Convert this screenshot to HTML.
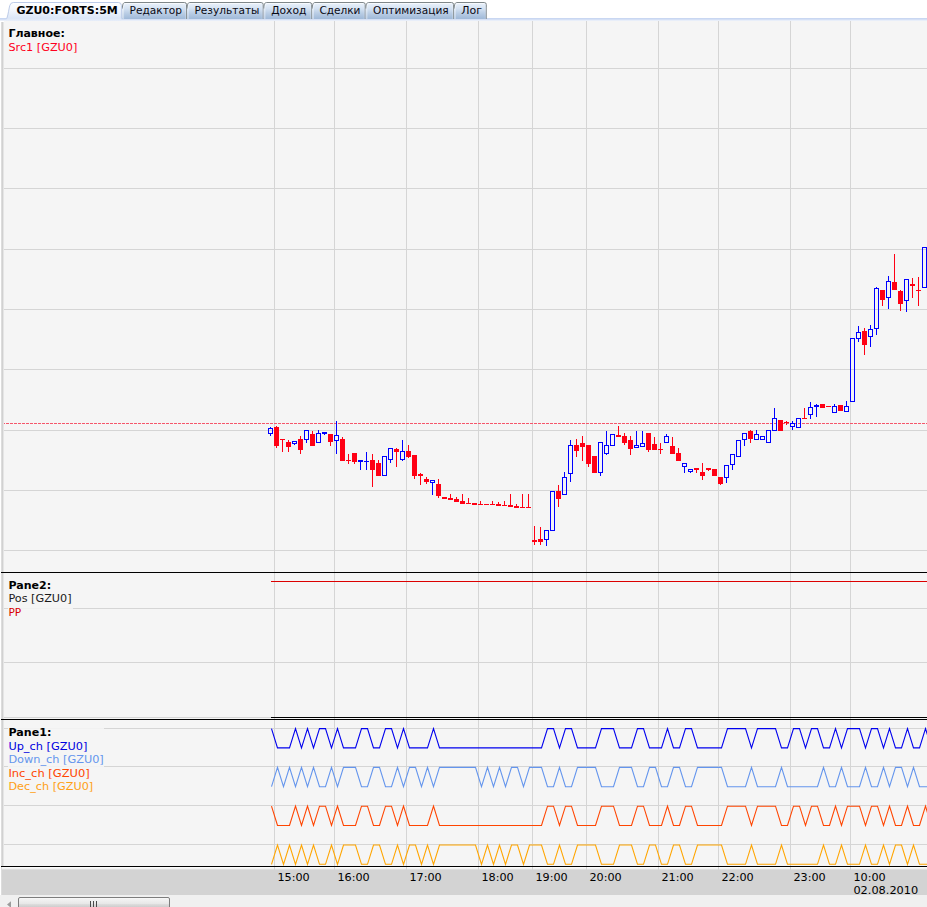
<!DOCTYPE html>
<html><head><meta charset="utf-8"><title>GZU0:FORTS:5M</title>
<style>
html,body{margin:0;padding:0;background:#fff;overflow:hidden}
svg{display:block}
text{font-family:"DejaVu Sans","Liberation Sans",sans-serif;font-size:11px}
.b{font-weight:bold}
</style></head><body>
<svg width="927" height="907" viewBox="0 0 927 907">
<defs>
<linearGradient id="ga" x1="0" y1="0" x2="0" y2="1"><stop offset="0" stop-color="#ffffff"/><stop offset="0.4" stop-color="#f3f7fd"/><stop offset="0.85" stop-color="#dbe6f7"/><stop offset="1" stop-color="#e8eef9"/></linearGradient>
<linearGradient id="gi" x1="0" y1="0" x2="0" y2="1"><stop offset="0" stop-color="#ecf3fb"/><stop offset="0.35" stop-color="#d6e3f3"/><stop offset="0.62" stop-color="#bccfe6"/><stop offset="1" stop-color="#9fb9d8"/></linearGradient>
<linearGradient id="gs" x1="0" y1="0" x2="0" y2="1"><stop offset="0" stop-color="#c9d8f1"/><stop offset="1" stop-color="#e9eef9"/></linearGradient>
<linearGradient id="gt" x1="0" y1="0" x2="0" y2="1"><stop offset="0" stop-color="#ffffff"/><stop offset="0.12" stop-color="#f3f3f3"/><stop offset="0.5" stop-color="#e8e8e8"/><stop offset="0.58" stop-color="#dcdcdc"/><stop offset="0.85" stop-color="#cacaca"/></linearGradient>
</defs>
<rect x="0" y="0" width="927" height="907" fill="#ffffff"/>

<rect x="0" y="18" width="927" height="1" fill="#c9d7f2"/><rect x="0" y="19" width="927" height="1" fill="#d5e0f5"/><rect x="0" y="20" width="927" height="1" fill="#e8eef9"/>
<path d="M122.3,19 L122.3,7 C122.39999999999999,4.5 123.2,2.5 125.0,2.5 L184.5,2.5 Q186.5,2.5 186.5,4.5 L186.5,19 Z" fill="url(#gi)"/>
<path d="M125.2,3.5 L184.5,3.5" fill="none" stroke="#ffffff" stroke-opacity="0.6" stroke-width="1"/>
<path d="M123.3,19 L123.3,7.5 C123.39999999999999,5 124.0,3.8 125.2,3.6" fill="none" stroke="#ffffff" stroke-opacity="0.38" stroke-width="1.6"/>
<path d="M185.5,5 L185.5,19" fill="none" stroke="#ffffff" stroke-opacity="0.22" stroke-width="1"/>
<path d="M122.39999999999999,8.5 C122.39999999999999,4.8 123.2,2.5 125.0,2.5 L184.5,2.5 Q186.5,2.5 186.5,4.5 L186.5,7" fill="none" stroke="#7f878a" stroke-width="1"/>
<path d="M186.5,7 L186.5,19" fill="none" stroke="#8b9397" stroke-width="1"/>
<text x="129.5" y="14" fill="#0a0a14" textLength="52.6" lengthAdjust="spacingAndGlyphs">Редактор</text>
<path d="M187.0,19 L187.0,7 C187.1,4.5 187.9,2.5 189.7,2.5 L261.2,2.5 Q263.2,2.5 263.2,4.5 L263.2,19 Z" fill="url(#gi)"/>
<path d="M189.9,3.5 L261.2,3.5" fill="none" stroke="#ffffff" stroke-opacity="0.6" stroke-width="1"/>
<path d="M188.0,19 L188.0,7.5 C188.1,5 188.7,3.8 189.9,3.6" fill="none" stroke="#ffffff" stroke-opacity="0.38" stroke-width="1.6"/>
<path d="M262.2,5 L262.2,19" fill="none" stroke="#ffffff" stroke-opacity="0.22" stroke-width="1"/>
<path d="M187.1,8.5 C187.1,4.8 187.9,2.5 189.7,2.5 L261.2,2.5 Q263.2,2.5 263.2,4.5 L263.2,7" fill="none" stroke="#7f878a" stroke-width="1"/>
<path d="M263.2,7 L263.2,19" fill="none" stroke="#8b9397" stroke-width="1"/>
<text x="194.4" y="14" fill="#0a0a14" textLength="65.1" lengthAdjust="spacingAndGlyphs">Результаты</text>
<path d="M263.7,19 L263.7,7 C263.8,4.5 264.59999999999997,2.5 266.4,2.5 L309.7,2.5 Q311.7,2.5 311.7,4.5 L311.7,19 Z" fill="url(#gi)"/>
<path d="M266.59999999999997,3.5 L309.7,3.5" fill="none" stroke="#ffffff" stroke-opacity="0.6" stroke-width="1"/>
<path d="M264.7,19 L264.7,7.5 C264.8,5 265.4,3.8 266.59999999999997,3.6" fill="none" stroke="#ffffff" stroke-opacity="0.38" stroke-width="1.6"/>
<path d="M310.7,5 L310.7,19" fill="none" stroke="#ffffff" stroke-opacity="0.22" stroke-width="1"/>
<path d="M263.8,8.5 C263.8,4.8 264.59999999999997,2.5 266.4,2.5 L309.7,2.5 Q311.7,2.5 311.7,4.5 L311.7,7" fill="none" stroke="#7f878a" stroke-width="1"/>
<path d="M311.7,7 L311.7,19" fill="none" stroke="#8b9397" stroke-width="1"/>
<text x="271.2" y="14" fill="#0a0a14" textLength="35.2" lengthAdjust="spacingAndGlyphs">Доход</text>
<path d="M312.2,19 L312.2,7 C312.3,4.5 313.09999999999997,2.5 314.9,2.5 L363.2,2.5 Q365.2,2.5 365.2,4.5 L365.2,19 Z" fill="url(#gi)"/>
<path d="M315.09999999999997,3.5 L363.2,3.5" fill="none" stroke="#ffffff" stroke-opacity="0.6" stroke-width="1"/>
<path d="M313.2,19 L313.2,7.5 C313.3,5 313.9,3.8 315.09999999999997,3.6" fill="none" stroke="#ffffff" stroke-opacity="0.38" stroke-width="1.6"/>
<path d="M364.2,5 L364.2,19" fill="none" stroke="#ffffff" stroke-opacity="0.22" stroke-width="1"/>
<path d="M312.3,8.5 C312.3,4.8 313.09999999999997,2.5 314.9,2.5 L363.2,2.5 Q365.2,2.5 365.2,4.5 L365.2,7" fill="none" stroke="#7f878a" stroke-width="1"/>
<path d="M365.2,7 L365.2,19" fill="none" stroke="#8b9397" stroke-width="1"/>
<text x="319.4" y="14" fill="#0a0a14" textLength="41" lengthAdjust="spacingAndGlyphs">Сделки</text>
<path d="M365.7,19 L365.7,7 C365.8,4.5 366.59999999999997,2.5 368.4,2.5 L451.6,2.5 Q453.6,2.5 453.6,4.5 L453.6,19 Z" fill="url(#gi)"/>
<path d="M368.59999999999997,3.5 L451.6,3.5" fill="none" stroke="#ffffff" stroke-opacity="0.6" stroke-width="1"/>
<path d="M366.7,19 L366.7,7.5 C366.8,5 367.4,3.8 368.59999999999997,3.6" fill="none" stroke="#ffffff" stroke-opacity="0.38" stroke-width="1.6"/>
<path d="M452.6,5 L452.6,19" fill="none" stroke="#ffffff" stroke-opacity="0.22" stroke-width="1"/>
<path d="M365.8,8.5 C365.8,4.8 366.59999999999997,2.5 368.4,2.5 L451.6,2.5 Q453.6,2.5 453.6,4.5 L453.6,7" fill="none" stroke="#7f878a" stroke-width="1"/>
<path d="M453.6,7 L453.6,19" fill="none" stroke="#8b9397" stroke-width="1"/>
<text x="373.1" y="14" fill="#0a0a14" textLength="75.5" lengthAdjust="spacingAndGlyphs">Оптимизация</text>
<path d="M454.1,19 L454.1,7 C454.20000000000005,4.5 455.0,2.5 456.8,2.5 L484.3,2.5 Q486.3,2.5 486.3,4.5 L486.3,19 Z" fill="url(#gi)"/>
<path d="M457.0,3.5 L484.3,3.5" fill="none" stroke="#ffffff" stroke-opacity="0.6" stroke-width="1"/>
<path d="M455.1,19 L455.1,7.5 C455.20000000000005,5 455.8,3.8 457.0,3.6" fill="none" stroke="#ffffff" stroke-opacity="0.38" stroke-width="1.6"/>
<path d="M485.3,5 L485.3,19" fill="none" stroke="#ffffff" stroke-opacity="0.22" stroke-width="1"/>
<path d="M454.20000000000005,8.5 C454.20000000000005,4.8 455.0,2.5 456.8,2.5 L484.3,2.5 Q486.3,2.5 486.3,4.5 L486.3,7" fill="none" stroke="#7f878a" stroke-width="1"/>
<path d="M486.3,7 L486.3,19" fill="none" stroke="#8b9397" stroke-width="1"/>
<text x="461.2" y="14" fill="#0a0a14" textLength="20.8" lengthAdjust="spacingAndGlyphs">Лог</text>
<path d="M6.8,18.5 C8.4,14 9.0,8 9.8,5.5 Q10.6,2.5 13.3,2.5 L118.4,2.5 Q121.4,2.5 121.4,5.5 L121.4,18.5 L121.4,21 L5.8,21 Z" fill="url(#ga)"/>
<path d="M6.8,18.5 C8.4,14 9.0,8 9.8,5.5 Q10.6,2.5 13.3,2.5 L118.4,2.5 Q121.4,2.5 121.4,5.5 L121.4,18.5" fill="none" stroke="#bccbe8" stroke-width="1"/>
<text class="b" x="16.4" y="14" fill="#000" textLength="101.4" lengthAdjust="spacingAndGlyphs">GZU0:FORTS:5M</text>
<rect x="4" y="21" width="923" height="846" fill="#f5f5f5"/>
<rect x="1" y="22" width="1" height="873" fill="#dcdcdc"/>
<rect x="2" y="22" width="1" height="873" fill="#d1d1d1"/>
<rect x="3" y="22" width="1" height="873" fill="#e5e5e5"/>
<rect x="2" y="867" width="925" height="1" fill="#fafafa"/>
<rect x="2" y="868" width="925" height="1" fill="#f2f2f2"/>
<rect x="2" y="869" width="925" height="1" fill="#dedede"/>
<rect x="2" y="870" width="925" height="25" fill="#d3d3d3"/>
<rect x="0" y="895" width="927" height="12" fill="#f0f0f0"/>
<g fill="#d5d5d5" shape-rendering="crispEdges">
<rect x="4" y="68" width="923" height="1"/>
<rect x="4" y="128" width="923" height="1"/>
<rect x="4" y="188" width="923" height="1"/>
<rect x="4" y="249" width="923" height="1"/>
<rect x="4" y="309" width="923" height="1"/>
<rect x="4" y="369" width="923" height="1"/>
<rect x="4" y="430" width="923" height="1"/>
<rect x="4" y="490" width="923" height="1"/>
<rect x="4" y="550" width="923" height="1"/>
<rect x="4" y="608" width="923" height="1"/>
<rect x="4" y="662" width="923" height="1"/>
<rect x="4" y="717" width="923" height="1"/>
<rect x="4" y="728" width="923" height="1"/>
<rect x="4" y="766" width="923" height="1"/>
<rect x="4" y="805" width="923" height="1"/>
<rect x="4" y="844" width="923" height="1"/>
<rect x="274" y="21" width="1" height="849"/>
<rect x="334" y="21" width="1" height="849"/>
<rect x="406" y="21" width="1" height="849"/>
<rect x="478" y="21" width="1" height="849"/>
<rect x="532" y="21" width="1" height="849"/>
<rect x="586" y="21" width="1" height="849"/>
<rect x="658" y="21" width="1" height="849"/>
<rect x="718" y="21" width="1" height="849"/>
<rect x="790" y="21" width="1" height="849"/>
<rect x="850" y="21" width="1" height="849"/>
</g>
<rect x="8" y="24" width="70" height="30" fill="#f5f5f5" fill-opacity="0.88"/>
<rect x="8" y="576" width="65" height="43" fill="#f5f5f5" fill-opacity="0.88"/>
<rect x="8" y="723" width="96" height="70" fill="#f5f5f5" fill-opacity="0.88"/>
<line x1="4" y1="423.5" x2="927" y2="423.5" stroke="#f5566b" stroke-width="1" stroke-dasharray="3 1" stroke-dashoffset="2" shape-rendering="crispEdges"/>
<g shape-rendering="crispEdges">
<rect x="270" y="427" width="1" height="1" fill="#0000ff"/>
<rect x="270" y="434" width="1" height="2" fill="#0000ff"/>
<rect x="268.5" y="428.5" width="4" height="5" fill="none" stroke="#0000ff" stroke-width="1"/>
<rect x="276" y="426" width="1" height="22" fill="#ff0014"/>
<rect x="274" y="427" width="5" height="19" fill="#ff0014"/>
<rect x="282" y="439" width="1" height="13" fill="#ff0014"/>
<rect x="280" y="439" width="5" height="1" fill="#ff0014"/>
<rect x="288" y="440" width="1" height="12" fill="#ff0014"/>
<rect x="286" y="442" width="5" height="5" fill="#ff0014"/>
<rect x="294" y="444" width="1" height="1" fill="#0000ff"/>
<rect x="292.5" y="441.5" width="4" height="2" fill="none" stroke="#0000ff" stroke-width="1"/>
<rect x="300" y="436" width="1" height="18" fill="#ff0014"/>
<rect x="298" y="439" width="5" height="11" fill="#ff0014"/>
<rect x="306" y="440" width="1" height="3" fill="#0000ff"/>
<rect x="304.5" y="430.5" width="4" height="9" fill="none" stroke="#0000ff" stroke-width="1"/>
<rect x="312" y="431" width="1" height="15" fill="#ff0014"/>
<rect x="310" y="434" width="5" height="12" fill="#ff0014"/>
<rect x="318" y="430" width="1" height="3" fill="#0000ff"/>
<rect x="316.5" y="433.5" width="4" height="9" fill="none" stroke="#0000ff" stroke-width="1"/>
<rect x="324" y="432" width="1" height="3" fill="#0000ff"/>
<rect x="322" y="432" width="5" height="2" fill="#0000ff"/>
<rect x="330" y="434" width="1" height="12" fill="#ff0014"/>
<rect x="328" y="434" width="5" height="8" fill="#ff0014"/>
<rect x="336" y="421" width="1" height="14" fill="#0000ff"/>
<rect x="336" y="441" width="1" height="13" fill="#0000ff"/>
<rect x="334.5" y="435.5" width="4" height="5" fill="none" stroke="#0000ff" stroke-width="1"/>
<rect x="342" y="437" width="1" height="24" fill="#ff0014"/>
<rect x="340" y="439" width="5" height="22" fill="#ff0014"/>
<rect x="348" y="454" width="1" height="10" fill="#ff0014"/>
<rect x="346" y="460" width="5" height="1" fill="#ff0014"/>
<rect x="354" y="453" width="1" height="11" fill="#ff0014"/>
<rect x="352" y="453" width="5" height="9" fill="#ff0014"/>
<rect x="360" y="460" width="1" height="10" fill="#0000ff"/>
<rect x="358" y="460" width="5" height="2" fill="#0000ff"/>
<rect x="366" y="452" width="1" height="18" fill="#0000ff"/>
<rect x="364" y="461" width="5" height="1" fill="#0000ff"/>
<rect x="372" y="454" width="1" height="33" fill="#ff0014"/>
<rect x="370" y="460" width="5" height="10" fill="#ff0014"/>
<rect x="378" y="460" width="1" height="16" fill="#ff0014"/>
<rect x="376" y="463" width="5" height="13" fill="#ff0014"/>
<rect x="382.5" y="456.5" width="4" height="19" fill="none" stroke="#0000ff" stroke-width="1"/>
<rect x="390" y="460" width="1" height="3" fill="#0000ff"/>
<rect x="388.5" y="448.5" width="4" height="11" fill="none" stroke="#0000ff" stroke-width="1"/>
<rect x="396" y="448" width="1" height="19" fill="#ff0014"/>
<rect x="394" y="449" width="5" height="3" fill="#ff0014"/>
<rect x="402" y="440" width="1" height="11" fill="#0000ff"/>
<rect x="402" y="460" width="1" height="1" fill="#0000ff"/>
<rect x="400.5" y="451.5" width="4" height="8" fill="none" stroke="#0000ff" stroke-width="1"/>
<rect x="408" y="445" width="1" height="13" fill="#ff0014"/>
<rect x="406" y="451" width="5" height="6" fill="#ff0014"/>
<rect x="414" y="455" width="1" height="24" fill="#ff0014"/>
<rect x="412" y="455" width="5" height="21" fill="#ff0014"/>
<rect x="420" y="473" width="1" height="12" fill="#ff0014"/>
<rect x="418" y="474" width="5" height="2" fill="#ff0014"/>
<rect x="426" y="477" width="1" height="7" fill="#ff0014"/>
<rect x="424" y="479" width="5" height="3" fill="#ff0014"/>
<rect x="432" y="483" width="1" height="12" fill="#0000ff"/>
<rect x="430.5" y="480.5" width="4" height="2" fill="none" stroke="#0000ff" stroke-width="1"/>
<rect x="438" y="479" width="1" height="19" fill="#ff0014"/>
<rect x="436" y="484" width="5" height="12" fill="#ff0014"/>
<rect x="444" y="497" width="1" height="2" fill="#ff0014"/>
<rect x="442" y="497" width="5" height="2" fill="#ff0014"/>
<rect x="450" y="494" width="1" height="6" fill="#ff0014"/>
<rect x="448" y="498" width="5" height="2" fill="#ff0014"/>
<rect x="456" y="497" width="1" height="5" fill="#ff0014"/>
<rect x="454" y="499" width="5" height="3" fill="#ff0014"/>
<rect x="462" y="494" width="1" height="10" fill="#ff0014"/>
<rect x="460" y="501" width="5" height="3" fill="#ff0014"/>
<rect x="468" y="498" width="1" height="6" fill="#ff0014"/>
<rect x="466" y="503" width="5" height="1" fill="#ff0014"/>
<rect x="474" y="503" width="1" height="2" fill="#ff0014"/>
<rect x="472" y="503" width="5" height="2" fill="#ff0014"/>
<rect x="480" y="501" width="1" height="4" fill="#ff0014"/>
<rect x="478" y="504" width="5" height="1" fill="#ff0014"/>
<rect x="486" y="504" width="1" height="1" fill="#ff0014"/>
<rect x="484" y="504" width="5" height="1" fill="#ff0014"/>
<rect x="492" y="501" width="1" height="4" fill="#ff0014"/>
<rect x="490" y="504" width="5" height="1" fill="#ff0014"/>
<rect x="498" y="502" width="1" height="4" fill="#ff0014"/>
<rect x="496" y="504" width="5" height="2" fill="#ff0014"/>
<rect x="504" y="501" width="1" height="5" fill="#ff0014"/>
<rect x="502" y="505" width="5" height="1" fill="#ff0014"/>
<rect x="510" y="494" width="1" height="13" fill="#ff0014"/>
<rect x="508" y="505" width="5" height="2" fill="#ff0014"/>
<rect x="516" y="504" width="1" height="4" fill="#ff0014"/>
<rect x="514" y="506" width="5" height="2" fill="#ff0014"/>
<rect x="522" y="494" width="1" height="14" fill="#ff0014"/>
<rect x="520" y="507" width="5" height="1" fill="#ff0014"/>
<rect x="528" y="494" width="1" height="14" fill="#ff0014"/>
<rect x="526" y="507" width="5" height="1" fill="#ff0014"/>
<rect x="534" y="526" width="1" height="19" fill="#ff0014"/>
<rect x="532" y="540" width="5" height="2" fill="#ff0014"/>
<rect x="540" y="527" width="1" height="18" fill="#ff0014"/>
<rect x="538" y="539" width="5" height="3" fill="#ff0014"/>
<rect x="546" y="540" width="1" height="6" fill="#0000ff"/>
<rect x="544.5" y="530.5" width="4" height="9" fill="none" stroke="#0000ff" stroke-width="1"/>
<rect x="550.5" y="491.5" width="4" height="39" fill="none" stroke="#0000ff" stroke-width="1"/>
<rect x="558" y="485" width="1" height="22" fill="#ff0014"/>
<rect x="556" y="491" width="5" height="8" fill="#ff0014"/>
<rect x="564" y="472" width="1" height="5" fill="#0000ff"/>
<rect x="562.5" y="477.5" width="4" height="17" fill="none" stroke="#0000ff" stroke-width="1"/>
<rect x="570" y="440" width="1" height="5" fill="#0000ff"/>
<rect x="570" y="474" width="1" height="8" fill="#0000ff"/>
<rect x="568.5" y="445.5" width="4" height="28" fill="none" stroke="#0000ff" stroke-width="1"/>
<rect x="576" y="439" width="1" height="18" fill="#ff0014"/>
<rect x="574" y="445" width="5" height="6" fill="#ff0014"/>
<rect x="582" y="436" width="1" height="25" fill="#ff0014"/>
<rect x="580" y="443" width="5" height="4" fill="#ff0014"/>
<rect x="588" y="445" width="1" height="22" fill="#ff0014"/>
<rect x="586" y="445" width="5" height="19" fill="#ff0014"/>
<rect x="594" y="456" width="1" height="17" fill="#ff0014"/>
<rect x="592" y="456" width="5" height="17" fill="#ff0014"/>
<rect x="600" y="473" width="1" height="3" fill="#0000ff"/>
<rect x="598.5" y="442.5" width="4" height="30" fill="none" stroke="#0000ff" stroke-width="1"/>
<rect x="606" y="431" width="1" height="14" fill="#0000ff"/>
<rect x="606" y="454" width="1" height="1" fill="#0000ff"/>
<rect x="604.5" y="445.5" width="4" height="8" fill="none" stroke="#0000ff" stroke-width="1"/>
<rect x="610.5" y="434.5" width="4" height="11" fill="none" stroke="#0000ff" stroke-width="1"/>
<rect x="618" y="426" width="1" height="11" fill="#ff0014"/>
<rect x="616" y="435" width="5" height="2" fill="#ff0014"/>
<rect x="624" y="433" width="1" height="12" fill="#ff0014"/>
<rect x="622" y="436" width="5" height="7" fill="#ff0014"/>
<rect x="630" y="436" width="1" height="19" fill="#ff0014"/>
<rect x="628" y="440" width="5" height="9" fill="#ff0014"/>
<rect x="636" y="431" width="1" height="14" fill="#0000ff"/>
<rect x="634.5" y="445.5" width="4" height="2" fill="none" stroke="#0000ff" stroke-width="1"/>
<rect x="642" y="431" width="1" height="12" fill="#0000ff"/>
<rect x="640.5" y="443.5" width="4" height="3" fill="none" stroke="#0000ff" stroke-width="1"/>
<rect x="648" y="433" width="1" height="19" fill="#ff0014"/>
<rect x="646" y="433" width="5" height="17" fill="#ff0014"/>
<rect x="654" y="437" width="1" height="13" fill="#ff0014"/>
<rect x="652" y="444" width="5" height="6" fill="#ff0014"/>
<rect x="660" y="443" width="1" height="11" fill="#ff0014"/>
<rect x="658" y="449" width="5" height="1" fill="#ff0014"/>
<rect x="666" y="434" width="1" height="2" fill="#0000ff"/>
<rect x="664.5" y="436.5" width="4" height="6" fill="none" stroke="#0000ff" stroke-width="1"/>
<rect x="672" y="437" width="1" height="17" fill="#ff0014"/>
<rect x="670" y="446" width="5" height="8" fill="#ff0014"/>
<rect x="678" y="448" width="1" height="13" fill="#ff0014"/>
<rect x="676" y="453" width="5" height="8" fill="#ff0014"/>
<rect x="684" y="467" width="1" height="6" fill="#0000ff"/>
<rect x="682.5" y="463.5" width="4" height="3" fill="none" stroke="#0000ff" stroke-width="1"/>
<rect x="690" y="472" width="1" height="1" fill="#0000ff"/>
<rect x="688.5" y="469.5" width="4" height="2" fill="none" stroke="#0000ff" stroke-width="1"/>
<rect x="696" y="468" width="1" height="5" fill="#ff0014"/>
<rect x="694" y="468" width="5" height="2" fill="#ff0014"/>
<rect x="702" y="463" width="1" height="17" fill="#ff0014"/>
<rect x="700" y="472" width="5" height="4" fill="#ff0014"/>
<rect x="708" y="468" width="1" height="3" fill="#ff0014"/>
<rect x="706" y="468" width="5" height="2" fill="#ff0014"/>
<rect x="714" y="469" width="1" height="7" fill="#ff0014"/>
<rect x="712" y="469" width="5" height="7" fill="#ff0014"/>
<rect x="720" y="477" width="1" height="8" fill="#ff0014"/>
<rect x="718" y="477" width="5" height="7" fill="#ff0014"/>
<rect x="726" y="478" width="1" height="5" fill="#0000ff"/>
<rect x="724.5" y="465.5" width="4" height="12" fill="none" stroke="#0000ff" stroke-width="1"/>
<rect x="732" y="465" width="1" height="5" fill="#0000ff"/>
<rect x="730.5" y="454.5" width="4" height="10" fill="none" stroke="#0000ff" stroke-width="1"/>
<rect x="736.5" y="440.5" width="4" height="16" fill="none" stroke="#0000ff" stroke-width="1"/>
<rect x="744" y="440" width="1" height="6" fill="#0000ff"/>
<rect x="742.5" y="433.5" width="4" height="6" fill="none" stroke="#0000ff" stroke-width="1"/>
<rect x="750" y="430" width="1" height="13" fill="#ff0014"/>
<rect x="748" y="431" width="5" height="8" fill="#ff0014"/>
<rect x="756" y="430" width="1" height="4" fill="#0000ff"/>
<rect x="754.5" y="434.5" width="4" height="5" fill="none" stroke="#0000ff" stroke-width="1"/>
<rect x="760.5" y="436.5" width="4" height="3" fill="none" stroke="#0000ff" stroke-width="1"/>
<rect x="766.5" y="430.5" width="4" height="12" fill="none" stroke="#0000ff" stroke-width="1"/>
<rect x="774" y="408" width="1" height="10" fill="#0000ff"/>
<rect x="772.5" y="418.5" width="4" height="12" fill="none" stroke="#0000ff" stroke-width="1"/>
<rect x="780" y="420" width="1" height="11" fill="#ff0014"/>
<rect x="778" y="420" width="5" height="11" fill="#ff0014"/>
<rect x="786" y="421" width="1" height="4" fill="#ff0014"/>
<rect x="784" y="422" width="5" height="1" fill="#ff0014"/>
<rect x="792" y="421" width="1" height="2" fill="#0000ff"/>
<rect x="792" y="427" width="1" height="3" fill="#0000ff"/>
<rect x="790.5" y="423.5" width="4" height="3" fill="none" stroke="#0000ff" stroke-width="1"/>
<rect x="796.5" y="418.5" width="4" height="9" fill="none" stroke="#0000ff" stroke-width="1"/>
<rect x="804" y="408" width="1" height="11" fill="#ff0014"/>
<rect x="802" y="418" width="5" height="1" fill="#ff0014"/>
<rect x="810" y="402" width="1" height="5" fill="#0000ff"/>
<rect x="810" y="415" width="1" height="4" fill="#0000ff"/>
<rect x="808.5" y="407.5" width="4" height="7" fill="none" stroke="#0000ff" stroke-width="1"/>
<rect x="816" y="404" width="1" height="13" fill="#0000ff"/>
<rect x="814" y="405" width="5" height="2" fill="#0000ff"/>
<rect x="822" y="404" width="1" height="4" fill="#ff0014"/>
<rect x="820" y="404" width="5" height="4" fill="#ff0014"/>
<rect x="828" y="406" width="1" height="1" fill="#ff0014"/>
<rect x="826" y="406" width="5" height="1" fill="#ff0014"/>
<rect x="834" y="404" width="1" height="2" fill="#0000ff"/>
<rect x="832.5" y="406.5" width="4" height="6" fill="none" stroke="#0000ff" stroke-width="1"/>
<rect x="840" y="405" width="1" height="6" fill="#ff0014"/>
<rect x="838" y="405" width="5" height="6" fill="#ff0014"/>
<rect x="846" y="401" width="1" height="5" fill="#0000ff"/>
<rect x="844.5" y="406.5" width="4" height="5" fill="none" stroke="#0000ff" stroke-width="1"/>
<rect x="850.5" y="338.5" width="4" height="63" fill="none" stroke="#0000ff" stroke-width="1"/>
<rect x="858" y="326" width="1" height="6" fill="#0000ff"/>
<rect x="858" y="339" width="1" height="3" fill="#0000ff"/>
<rect x="856.5" y="332.5" width="4" height="6" fill="none" stroke="#0000ff" stroke-width="1"/>
<rect x="864" y="328" width="1" height="27" fill="#ff0014"/>
<rect x="862" y="331" width="5" height="14" fill="#ff0014"/>
<rect x="870" y="325" width="1" height="4" fill="#0000ff"/>
<rect x="870" y="337" width="1" height="10" fill="#0000ff"/>
<rect x="868.5" y="329.5" width="4" height="7" fill="none" stroke="#0000ff" stroke-width="1"/>
<rect x="876" y="287" width="1" height="1" fill="#0000ff"/>
<rect x="876" y="329" width="1" height="6" fill="#0000ff"/>
<rect x="874.5" y="288.5" width="4" height="40" fill="none" stroke="#0000ff" stroke-width="1"/>
<rect x="882" y="290" width="1" height="16" fill="#ff0014"/>
<rect x="880" y="290" width="5" height="10" fill="#ff0014"/>
<rect x="888" y="276" width="1" height="5" fill="#0000ff"/>
<rect x="888" y="298" width="1" height="11" fill="#0000ff"/>
<rect x="886.5" y="281.5" width="4" height="16" fill="none" stroke="#0000ff" stroke-width="1"/>
<rect x="894" y="254" width="1" height="36" fill="#ff0014"/>
<rect x="892" y="282" width="5" height="8" fill="#ff0014"/>
<rect x="900" y="290" width="1" height="21" fill="#ff0014"/>
<rect x="898" y="291" width="5" height="13" fill="#ff0014"/>
<rect x="906" y="301" width="1" height="11" fill="#0000ff"/>
<rect x="904.5" y="279.5" width="4" height="21" fill="none" stroke="#0000ff" stroke-width="1"/>
<rect x="912" y="278" width="1" height="20" fill="#ff0014"/>
<rect x="910" y="284" width="5" height="2" fill="#ff0014"/>
<rect x="918" y="277" width="1" height="29" fill="#ff0014"/>
<rect x="916" y="290" width="5" height="1" fill="#ff0014"/>
<rect x="922.5" y="247.5" width="4" height="40" fill="none" stroke="#0000ff" stroke-width="1"/>
</g>
<rect x="271" y="581" width="656" height="1" fill="#dc0000" shape-rendering="crispEdges"/>
<rect x="271" y="717" width="656" height="1" fill="#000" shape-rendering="crispEdges"/>
<rect x="1" y="572" width="926" height="1" fill="#000" shape-rendering="crispEdges"/>
<rect x="1" y="719" width="926" height="1" fill="#000" shape-rendering="crispEdges"/>
<rect x="1" y="866" width="926" height="1" fill="#000" shape-rendering="crispEdges"/>
<polyline points="271.5,728.6 277.5,747.9 283.5,747.9 289.5,747.9 295.5,728.6 301.5,747.9 307.5,728.6 313.5,747.9 319.5,728.6 325.5,728.6 331.5,747.9 337.5,728.6 343.5,747.9 349.5,747.9 355.5,747.9 361.5,728.6 367.5,728.6 373.5,747.9 379.5,747.9 385.5,728.6 391.5,728.6 397.5,747.9 403.5,728.6 409.5,747.9 415.5,747.9 421.5,747.9 427.5,747.9 433.5,728.6 439.5,747.9 445.5,747.9 451.5,747.9 457.5,747.9 463.5,747.9 469.5,747.9 475.5,747.9 481.5,747.9 487.5,747.9 493.5,747.9 499.5,747.9 505.5,747.9 511.5,747.9 517.5,747.9 523.5,747.9 529.5,747.9 535.5,747.9 541.5,747.9 547.5,728.6 553.5,728.6 559.5,747.9 565.5,728.6 571.5,728.6 577.5,747.9 583.5,747.9 589.5,747.9 595.5,747.9 601.5,728.6 607.5,728.6 613.5,728.6 619.5,747.9 625.5,747.9 631.5,747.9 637.5,728.6 643.5,728.6 649.5,747.9 655.5,747.9 661.5,747.9 667.5,728.6 673.5,747.9 679.5,747.9 685.5,728.6 691.5,728.6 697.5,747.9 703.5,747.9 709.5,747.9 715.5,747.9 721.5,747.9 727.5,728.6 733.5,728.6 739.5,728.6 745.5,728.6 751.5,747.9 757.5,728.6 763.5,728.6 769.5,728.6 775.5,728.6 781.5,747.9 787.5,747.9 793.5,728.6 799.5,728.6 805.5,747.9 811.5,728.6 817.5,728.6 823.5,747.9 829.5,747.9 835.5,728.6 841.5,747.9 847.5,728.6 853.5,728.6 859.5,728.6 865.5,747.9 871.5,728.6 877.5,728.6 883.5,747.9 889.5,728.6 895.5,747.9 901.5,747.9 907.5,728.6 913.5,747.9 919.5,747.9 925.5,728.6 931.5,747.9" fill="none" stroke="#0000ee" stroke-width="1.1" stroke-linejoin="miter"/>
<polyline points="271.5,786.7 277.5,767.4 283.5,786.7 289.5,767.4 295.5,786.7 301.5,767.4 307.5,786.7 313.5,767.4 319.5,786.7 325.5,786.7 331.5,767.4 337.5,786.7 343.5,767.4 349.5,767.4 355.5,767.4 361.5,786.7 367.5,786.7 373.5,767.4 379.5,767.4 385.5,786.7 391.5,786.7 397.5,767.4 403.5,786.7 409.5,767.4 415.5,767.4 421.5,786.7 427.5,767.4 433.5,786.7 439.5,767.4 445.5,767.4 451.5,767.4 457.5,767.4 463.5,767.4 469.5,767.4 475.5,767.4 481.5,786.7 487.5,767.4 493.5,786.7 499.5,767.4 505.5,786.7 511.5,767.4 517.5,767.4 523.5,786.7 529.5,767.4 535.5,767.4 541.5,767.4 547.5,786.7 553.5,786.7 559.5,767.4 565.5,786.7 571.5,786.7 577.5,767.4 583.5,767.4 589.5,767.4 595.5,767.4 601.5,786.7 607.5,786.7 613.5,786.7 619.5,767.4 625.5,767.4 631.5,767.4 637.5,786.7 643.5,786.7 649.5,767.4 655.5,767.4 661.5,786.7 667.5,786.7 673.5,767.4 679.5,767.4 685.5,786.7 691.5,786.7 697.5,767.4 703.5,767.4 709.5,767.4 715.5,767.4 721.5,767.4 727.5,786.7 733.5,786.7 739.5,786.7 745.5,786.7 751.5,767.4 757.5,786.7 763.5,786.7 769.5,786.7 775.5,786.7 781.5,767.4 787.5,786.7 793.5,786.7 799.5,786.7 805.5,786.7 811.5,786.7 817.5,786.7 823.5,767.4 829.5,786.7 835.5,786.7 841.5,767.4 847.5,786.7 853.5,786.7 859.5,786.7 865.5,767.4 871.5,786.7 877.5,786.7 883.5,767.4 889.5,786.7 895.5,767.4 901.5,767.4 907.5,786.7 913.5,767.4 919.5,786.7 925.5,786.7 931.5,786.7" fill="none" stroke="#6495ed" stroke-width="1.1" stroke-linejoin="miter"/>
<polyline points="271.5,806.2 277.5,825.5 283.5,825.5 289.5,825.5 295.5,806.2 301.5,825.5 307.5,806.2 313.5,825.5 319.5,806.2 325.5,806.2 331.5,825.5 337.5,806.2 343.5,825.5 349.5,825.5 355.5,825.5 361.5,806.2 367.5,806.2 373.5,825.5 379.5,825.5 385.5,806.2 391.5,806.2 397.5,825.5 403.5,806.2 409.5,825.5 415.5,825.5 421.5,825.5 427.5,825.5 433.5,806.2 439.5,825.5 445.5,825.5 451.5,825.5 457.5,825.5 463.5,825.5 469.5,825.5 475.5,825.5 481.5,825.5 487.5,825.5 493.5,825.5 499.5,825.5 505.5,825.5 511.5,825.5 517.5,825.5 523.5,825.5 529.5,825.5 535.5,825.5 541.5,825.5 547.5,806.2 553.5,806.2 559.5,825.5 565.5,806.2 571.5,806.2 577.5,825.5 583.5,825.5 589.5,825.5 595.5,825.5 601.5,806.2 607.5,806.2 613.5,806.2 619.5,825.5 625.5,825.5 631.5,825.5 637.5,806.2 643.5,806.2 649.5,825.5 655.5,825.5 661.5,825.5 667.5,806.2 673.5,825.5 679.5,825.5 685.5,806.2 691.5,806.2 697.5,825.5 703.5,825.5 709.5,825.5 715.5,825.5 721.5,825.5 727.5,806.2 733.5,806.2 739.5,806.2 745.5,806.2 751.5,825.5 757.5,806.2 763.5,806.2 769.5,806.2 775.5,806.2 781.5,825.5 787.5,825.5 793.5,806.2 799.5,806.2 805.5,825.5 811.5,806.2 817.5,806.2 823.5,825.5 829.5,825.5 835.5,806.2 841.5,825.5 847.5,806.2 853.5,806.2 859.5,806.2 865.5,825.5 871.5,806.2 877.5,806.2 883.5,825.5 889.5,806.2 895.5,825.5 901.5,825.5 907.5,806.2 913.5,825.5 919.5,825.5 925.5,806.2 931.5,825.5" fill="none" stroke="#ff4500" stroke-width="1.1" stroke-linejoin="miter"/>
<polyline points="271.5,864.3 277.5,845.0 283.5,864.3 289.5,845.0 295.5,864.3 301.5,845.0 307.5,864.3 313.5,845.0 319.5,864.3 325.5,864.3 331.5,845.0 337.5,864.3 343.5,845.0 349.5,845.0 355.5,845.0 361.5,864.3 367.5,864.3 373.5,845.0 379.5,845.0 385.5,864.3 391.5,864.3 397.5,845.0 403.5,864.3 409.5,845.0 415.5,845.0 421.5,864.3 427.5,845.0 433.5,864.3 439.5,845.0 445.5,845.0 451.5,845.0 457.5,845.0 463.5,845.0 469.5,845.0 475.5,845.0 481.5,864.3 487.5,845.0 493.5,864.3 499.5,845.0 505.5,864.3 511.5,845.0 517.5,845.0 523.5,864.3 529.5,845.0 535.5,845.0 541.5,845.0 547.5,864.3 553.5,864.3 559.5,845.0 565.5,864.3 571.5,864.3 577.5,845.0 583.5,845.0 589.5,845.0 595.5,845.0 601.5,864.3 607.5,864.3 613.5,864.3 619.5,845.0 625.5,845.0 631.5,845.0 637.5,864.3 643.5,864.3 649.5,845.0 655.5,845.0 661.5,864.3 667.5,864.3 673.5,845.0 679.5,845.0 685.5,864.3 691.5,864.3 697.5,845.0 703.5,845.0 709.5,845.0 715.5,845.0 721.5,845.0 727.5,864.3 733.5,864.3 739.5,864.3 745.5,864.3 751.5,845.0 757.5,864.3 763.5,864.3 769.5,864.3 775.5,864.3 781.5,845.0 787.5,864.3 793.5,864.3 799.5,864.3 805.5,864.3 811.5,864.3 817.5,864.3 823.5,845.0 829.5,864.3 835.5,864.3 841.5,845.0 847.5,864.3 853.5,864.3 859.5,864.3 865.5,845.0 871.5,864.3 877.5,864.3 883.5,845.0 889.5,864.3 895.5,845.0 901.5,845.0 907.5,864.3 913.5,845.0 919.5,864.3 925.5,864.3 931.5,864.3" fill="none" stroke="#ffa500" stroke-width="1.1" stroke-linejoin="miter"/>
<text class="b" x="8.4" y="37" fill="#000" textLength="56.4" lengthAdjust="spacingAndGlyphs">Главное:</text>
<text x="8.4" y="51" fill="#ff0020" textLength="69" lengthAdjust="spacingAndGlyphs">Src1 [GZU0]</text>
<text class="b" x="8.4" y="589" fill="#000" textLength="42.8" lengthAdjust="spacingAndGlyphs">Pane2:</text>
<text x="8.4" y="602" fill="#1a1a1a" textLength="63.2" lengthAdjust="spacingAndGlyphs">Pos [GZU0]</text>
<text x="8.4" y="616" fill="#d80000" textLength="12.8" lengthAdjust="spacingAndGlyphs">PP</text>
<text class="b" x="8.4" y="736" fill="#000" textLength="43" lengthAdjust="spacingAndGlyphs">Pane1:</text>
<text x="8.4" y="750" fill="#0000e0" textLength="79" lengthAdjust="spacingAndGlyphs">Up_ch [GZU0]</text>
<text x="8.4" y="763" fill="#6495ed" textLength="95.4" lengthAdjust="spacingAndGlyphs">Down_ch [GZU0]</text>
<text x="8.4" y="777" fill="#ff4500" textLength="81.4" lengthAdjust="spacingAndGlyphs">Inc_ch [GZU0]</text>
<text x="8.4" y="790" fill="#ffa014" textLength="84.8" lengthAdjust="spacingAndGlyphs">Dec_ch [GZU0]</text>
<text x="277.4" y="881" fill="#000" textLength="32.3" lengthAdjust="spacingAndGlyphs">15:00</text>
<text x="337.4" y="881" fill="#000" textLength="32.3" lengthAdjust="spacingAndGlyphs">16:00</text>
<text x="409.4" y="881" fill="#000" textLength="32.3" lengthAdjust="spacingAndGlyphs">17:00</text>
<text x="481.4" y="881" fill="#000" textLength="32.3" lengthAdjust="spacingAndGlyphs">18:00</text>
<text x="535.4" y="881" fill="#000" textLength="32.3" lengthAdjust="spacingAndGlyphs">19:00</text>
<text x="589.4" y="881" fill="#000" textLength="32.3" lengthAdjust="spacingAndGlyphs">20:00</text>
<text x="661.4" y="881" fill="#000" textLength="32.3" lengthAdjust="spacingAndGlyphs">21:00</text>
<text x="721.4" y="881" fill="#000" textLength="32.3" lengthAdjust="spacingAndGlyphs">22:00</text>
<text x="793.4" y="881" fill="#000" textLength="32.3" lengthAdjust="spacingAndGlyphs">23:00</text>
<text x="853.4" y="881" fill="#000" textLength="32.3" lengthAdjust="spacingAndGlyphs">10:00</text>
<text x="853.4" y="894" fill="#000" textLength="64.8" lengthAdjust="spacingAndGlyphs">02.08.2010</text>
<rect x="18.5" y="897.5" width="151" height="12" rx="1.5" fill="url(#gt)" stroke="#7d7d7d" stroke-width="1"/>
<g fill="#4a4a4a" shape-rendering="crispEdges"><rect x="90" y="901" width="1" height="6"/><rect x="93" y="901" width="1" height="6"/><rect x="96" y="901" width="1" height="6"/></g>
<path d="M7,904.5 L11,901.2 L11,907.8 Z" fill="#9c9c9c"/>
</svg></body></html>
